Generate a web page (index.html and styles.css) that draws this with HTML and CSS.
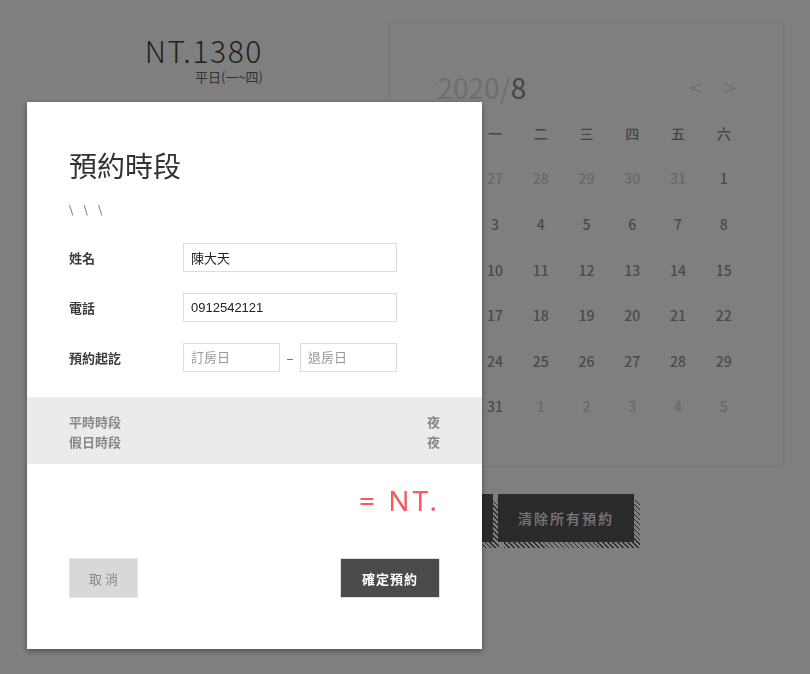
FILE: index.html
```html
<!DOCTYPE html>
<html lang="zh-Hant">
<head>
<meta charset="utf-8">
<title>預約時段</title>
<link rel="stylesheet" href="styles.css">
</head>
<body>
<div class="page">
  <div class="price-col">
    <div class="price">NT.1380</div>
    <div class="price-note">平日(一~四)</div>
  </div>
  <div class="cal-col">
    <div class="cal-card">
      <div class="cal-head">
        <div class="cal-month"><span class="cal-year">2020/</span>8</div>
        <div class="cal-nav"><span>&lt;</span><span>&gt;</span></div>
      </div>
      <div class="cal-grid">
        <div class="wd">日</div><div class="wd">一</div><div class="wd">二</div><div class="wd">三</div><div class="wd">四</div><div class="wd">五</div><div class="wd">六</div>
        <div class="d off">26</div><div class="d off">27</div><div class="d off">28</div><div class="d off">29</div><div class="d off">30</div><div class="d off">31</div><div class="d">1</div>
        <div class="d">2</div><div class="d">3</div><div class="d">4</div><div class="d">5</div><div class="d">6</div><div class="d">7</div><div class="d">8</div>
        <div class="d">9</div><div class="d">10</div><div class="d">11</div><div class="d">12</div><div class="d">13</div><div class="d">14</div><div class="d">15</div>
        <div class="d">16</div><div class="d">17</div><div class="d">18</div><div class="d">19</div><div class="d">20</div><div class="d">21</div><div class="d">22</div>
        <div class="d">23</div><div class="d">24</div><div class="d">25</div><div class="d">26</div><div class="d">27</div><div class="d">28</div><div class="d">29</div>
        <div class="d">30</div><div class="d">31</div><div class="d off">1</div><div class="d off">2</div><div class="d off">3</div><div class="d off">4</div><div class="d off">5</div>
      </div>
    </div>
    <div class="cal-actions">
      <button class="hatch-btn btn-a" aria-label="預約"></button>
      <button class="hatch-btn btn-b">清除所有預約</button>
    </div>
  </div>
</div>

<div class="overlay">
  <div class="modal">
    <div class="modal-body">
      <h2 class="modal-title">預約時段</h2>
      <div class="modal-sub">\ \ \</div>
      <div class="form">
        <div class="form-row">
          <label class="form-label">姓名</label>
          <input class="field field-wide" type="text" value="陳大天">
        </div>
        <div class="form-row">
          <label class="form-label">電話</label>
          <input class="field field-wide" type="text" value="0912542121">
        </div>
        <div class="form-row">
          <label class="form-label">預約起訖</label>
          <input class="field field-date" type="text" placeholder="訂房日">
          <span class="dash">–</span>
          <input class="field field-date" type="text" placeholder="退房日">
        </div>
      </div>
    </div>
    <div class="summary">
      <div class="summary-row"><span>平時時段</span><span>夜</span></div>
      <div class="summary-row"><span>假日時段</span><span>夜</span></div>
    </div>
    <div class="modal-body">
      <div class="total">= NT.</div>
      <div class="modal-actions">
        <button class="btn-cancel">取消</button>
        <button class="btn-confirm">確定預約</button>
      </div>
    </div>
  </div>
</div>
</body>
</html>
```

FILE: styles.css
```css
* { box-sizing: border-box; }

html {
  background: #ffffff;
}

html, body {
  margin: 0;
  padding: 0;
  font-family: "Noto Sans CJK TC", "Noto Sans", sans-serif;
  overflow: hidden;
}

.page {
  display: flex;
  padding-top: 23px;
  height: 674px;
}

.price-col {
  width: 263px;
  text-align: right;
  padding-top: 10px;
}

.price {
  font-size: 30px;
  line-height: 34px;
  font-weight: 300;
  letter-spacing: 1.6px;
  color: #444;
}

.price-note {
  margin-top: 1px;
  font-size: 13px;
  line-height: 18px;
  color: #666;
}

.cal-col {
  margin-left: 127px;
  width: 393px;
}

.cal-card {
  background: #fff;
  box-shadow: 0 0 3px rgba(0, 0, 0, 0.18);
  padding: 40px 36.5px 36.8px;
}

.cal-head {
  height: 47px;
  display: flex;
  align-items: center;
  justify-content: space-between;
  padding: 0 11px;
}

.cal-month {
  font-size: 28px;
  color: #8a8a8a;
  line-height: 40px;
}

.cal-year {
  color: #dcdcdc;
}

.cal-nav {
  display: flex;
  gap: 20px;
  font-size: 24px;
  color: #d6d6d6;
  font-weight: 300;
  line-height: 30px;
}

.cal-grid {
  display: grid;
  grid-template-columns: repeat(7, 1fr);
  grid-auto-rows: 45.6px;
}

.wd, .d {
  display: flex;
  align-items: center;
  justify-content: center;
  font-size: 14px;
  font-weight: 500;
  color: #949494;
}

.wd { color: #8c8c8c; }

.d.off { color: #d2d2d2; }

.cal-actions {
  display: flex;
  gap: 5px;
  margin-top: 28px;
  isolation: isolate;
}

.hatch-btn {
  position: relative;
  height: 48px;
  border: none;
  background: #555;
  color: #f2f2f2;
  font-family: inherit;
  font-size: 14px;
  letter-spacing: 2px;
  font-weight: 500;
}

.hatch-btn::after {
  content: "";
  position: absolute;
  left: 6px;
  top: 6px;
  width: 100%;
  height: 100%;
  z-index: -1;
  background: repeating-linear-gradient(45deg, #555 0 1px, #fff 1px 3.5px);
}

.btn-a { width: 103px; }
.btn-b { width: 136px; }

.overlay {
  position: fixed;
  inset: 0;
  background: rgba(0, 0, 0, 0.5);
}

.modal {
  margin: 102px 0 0 27px;
  width: 455px;
  height: 547px;
  background: #fff;
  box-shadow: 0 2px 6px rgba(0, 0, 0, 0.4);
}

.modal-body {
  padding: 0 42px;
}

.modal-title {
  margin: 0;
  padding-top: 44px;
  font-size: 28px;
  line-height: 38px;
  font-weight: 400;
  color: #333;
}

.modal-sub {
  margin-top: 16px;
  font-size: 13px;
  line-height: 20px;
  color: #888;
  letter-spacing: 3px;
  font-family: "DejaVu Sans", sans-serif;
}

.form {
  margin-top: 23px;
  display: flex;
  flex-direction: column;
  gap: 21px;
}

.form-row {
  display: flex;
  align-items: center;
  height: 29px;
}

.form-label {
  width: 114px;
  font-size: 13px;
  font-weight: 700;
  color: #3c3c3c;
}

.field {
  height: 29px;
  border: 1px solid #dcdcdc;
  padding: 0 7px;
  font-family: "Liberation Sans", "Noto Sans CJK TC", sans-serif;
  font-size: 13px;
  color: #222;
  outline: none;
  background: #fff;
}

.field::placeholder {
  color: #999;
}

.field-wide { width: 214px; }
.field-date { width: 97px; }

.dash {
  width: 20px;
  text-align: center;
  font-size: 13px;
  color: #555;
}

.summary {
  margin-top: 25px;
  height: 67px;
  background: #ebebeb;
  padding: 15px 42px 0;
}

.summary-row {
  display: flex;
  justify-content: space-between;
  font-size: 13px;
  line-height: 20px;
  font-weight: 700;
  color: #888;
}

.total {
  margin-top: 16px;
  text-align: right;
  font-size: 28px;
  line-height: 40px;
  letter-spacing: 3px;
  color: #f55a5e;
  font-family: "Noto Sans", sans-serif;
}

.modal-actions {
  margin-top: 38px;
  display: flex;
  justify-content: space-between;
}

.btn-cancel, .btn-confirm {
  height: 40px;
  border: 1px solid #e6e6e6;
  font-family: inherit;
  font-size: 13px;
}

.btn-cancel {
  width: 69px;
  background: #d8d8d8;
  color: #888;
  letter-spacing: 3px;
  padding-left: 9px;
}

.btn-confirm {
  width: 100px;
  background: #4a4b4a;
  color: #fff;
  font-weight: 700;
  letter-spacing: 1px;
  border-color: #ddd;
}
```
